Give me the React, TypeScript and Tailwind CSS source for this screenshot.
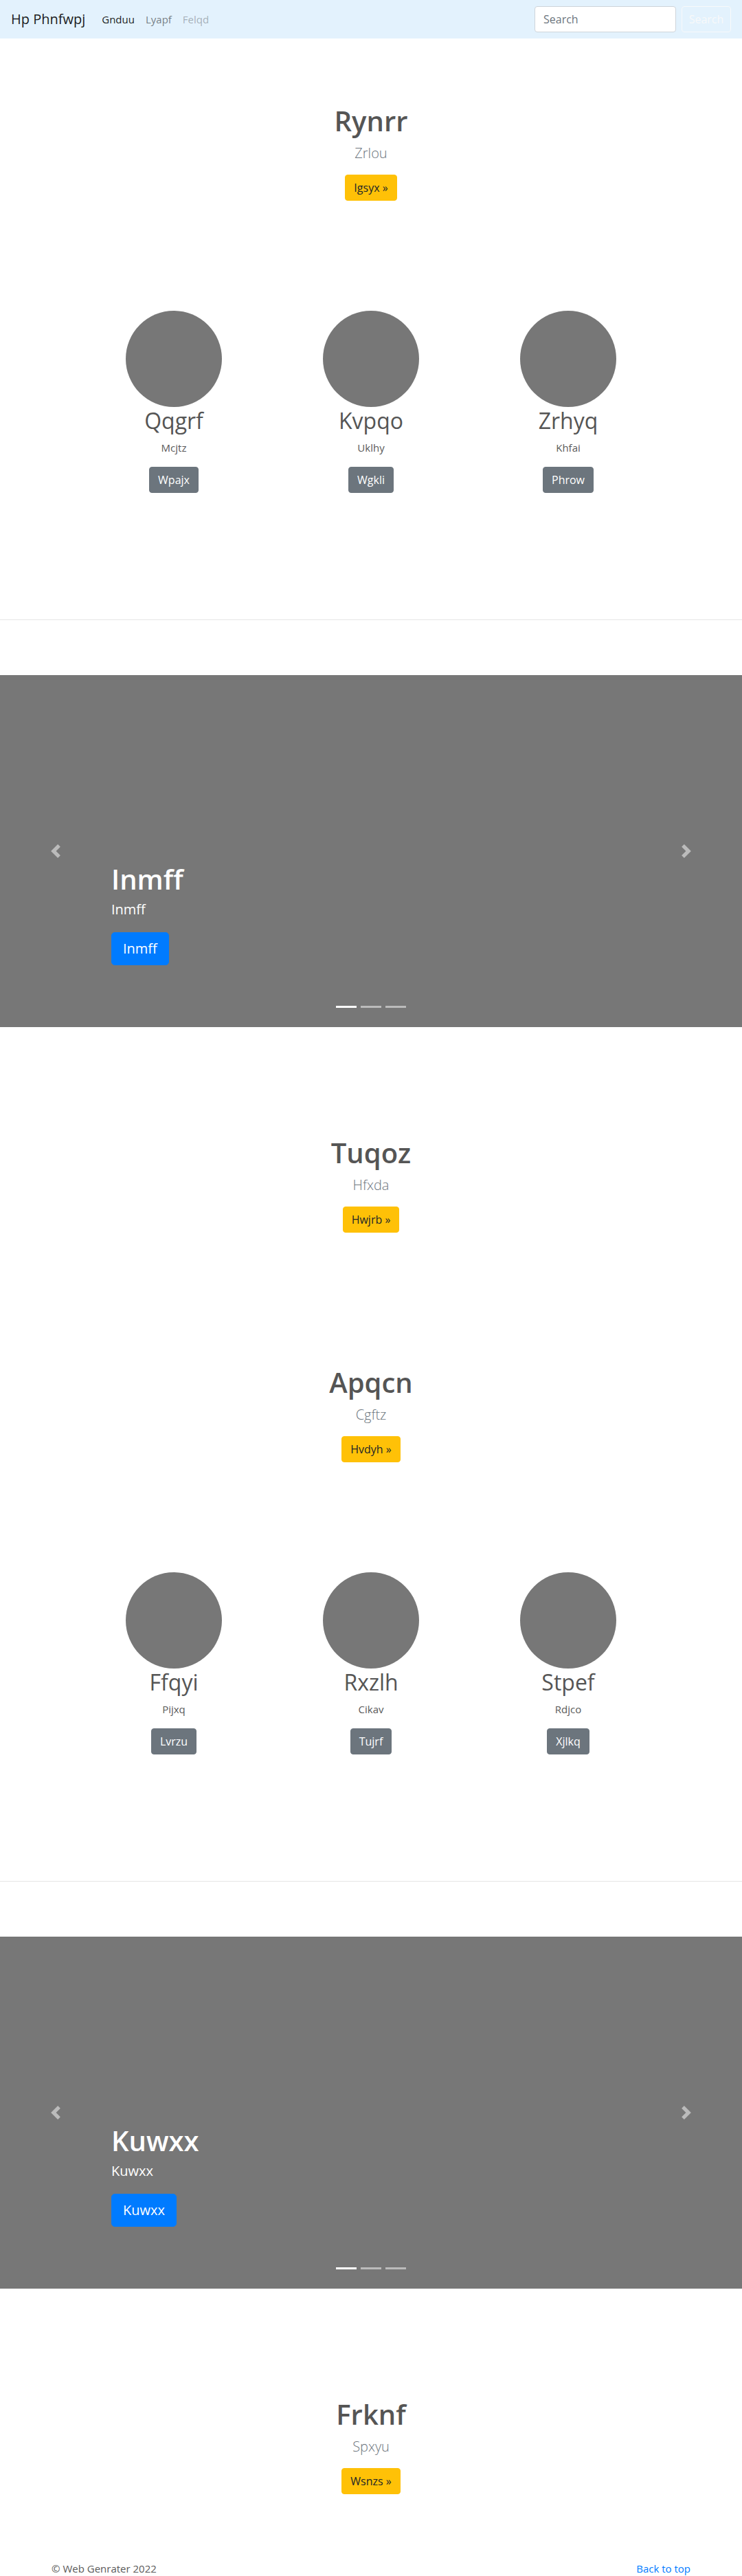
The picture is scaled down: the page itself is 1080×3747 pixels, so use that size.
import React from "react";

type Member = { name: string; role: string; cta: string };

const ROW_ONE: Member[] = [
  { name: "Qqgrf", role: "Mcjtz", cta: "Wpajx" },
  { name: "Kvpqo", role: "Uklhy", cta: "Wgkli" },
  { name: "Zrhyq", role: "Khfai", cta: "Phrow" },
];

const ROW_TWO: Member[] = [
  { name: "Ffqyi", role: "Pijxq", cta: "Lvrzu" },
  { name: "Rxzlh", role: "Cikav", cta: "Tujrf" },
  { name: "Stpef", role: "Rdjco", cta: "Xjlkq" },
];

function Hero({ title, lead, cta, className = "" }: { title: string; lead: string; cta: string; className?: string }) {
  return (
    <section className={`flex flex-col items-center text-center ${className}`}>
      <h1 className="mb-2 text-[40px] leading-[48px] font-semibold text-[#555]">{title}</h1>
      <p className="mb-4 text-xl leading-[30px] font-light text-[#6c757d]">{lead}</p>
      <a className="h-[38px] rounded border border-[#ffc107] bg-[#ffc107] px-3 py-[6px] text-base leading-6 text-[#212529]">
        {cta} »
      </a>
    </section>
  );
}

function Team({ people, className = "" }: { people: Member[]; className?: string }) {
  return (
    <div className={`mx-auto grid w-[861px] grid-cols-3 ${className}`}>
      {people.map((p) => (
        <div key={p.name} className="flex flex-col items-center text-center">
          <div className="h-[140px] w-[140px] rounded-full bg-[#777]" />
          <h2 className="mt-px mb-2 text-[32px] leading-[38px] font-normal text-[#555]">{p.name}</h2>
          <p className="mb-4 text-[15px] leading-6 text-[#5a5a5a]">{p.role}</p>
          <a className="h-[38px] rounded border border-[#6c757d] bg-[#6c757d] px-3 py-[6px] text-base leading-6 text-white">
            {p.cta}
          </a>
        </div>
      ))}
    </div>
  );
}

function Chevron({ dir }: { dir: "prev" | "next" }) {
  const d =
    dir === "prev"
      ? "M5.25 0l-4 4 4 4 1.5-1.5L4.25 4l2.5-2.5L5.25 0z"
      : "M2.75 0l-1.5 1.5L3.75 4l-2.5 2.5L2.75 8l4-4-4-4z";
  return (
    <svg viewBox="0 0 8 8" className="h-5 w-5" aria-hidden>
      <path d={d} fill="#fff" fillOpacity={0.5} />
    </svg>
  );
}

function Slide({ label, className = "" }: { label: string; className?: string }) {
  return (
    <div className={`relative h-[512px] bg-[#777] ${className}`}>
      <div className="absolute inset-y-0 left-0 flex w-[15%] items-center justify-center">
        <Chevron dir="prev" />
      </div>
      <div className="absolute inset-y-0 right-0 flex w-[15%] items-center justify-center">
        <Chevron dir="next" />
      </div>
      {/* caption */}
      <div className="absolute top-[273px] right-[15%] left-[15%] text-left text-white">
        <h1 className="mb-[5px] text-[40px] leading-[48px] font-semibold">{label}</h1>
        <p className="mb-[18px] text-xl leading-[30px]">{label}</p>
        <a className="inline-block h-12 rounded-[5px] border border-[#007bff] bg-[#007bff] px-4 py-2 text-xl leading-[30px] text-white">
          {label}
        </a>
      </div>
      <div className="absolute inset-x-0 bottom-[28px] flex justify-center gap-[6px]">
        <span className="h-[3px] w-[30px] bg-white" />
        <span className="h-[3px] w-[30px] bg-white/50" />
        <span className="h-[3px] w-[30px] bg-white/50" />
      </div>
    </div>
  );
}

export default function App() {
  return (
    <div className="min-h-[3747px] bg-white font-['Open_Sans',sans-serif] text-[#212529]">
      <nav className="flex h-14 items-center justify-between bg-[#e3f2fd] px-4">
        <div className="flex items-center">
          <a className="mr-4 text-xl leading-[30px] text-black/90">Hp Phnfwpj</a>
          <ul className="flex items-center text-[15px]">
            <li className="px-2 text-black/90">Gnduu</li>
            <li className="px-2 text-black/50">Lyapf</li>
            <li className="px-2 text-black/30">Felqd</li>
          </ul>
        </div>
        <form className="flex items-center gap-2">
          <input
            placeholder="Search"
            className="h-[38px] w-[206px] rounded border border-[#ced4da] bg-white px-3 text-base text-[#495057] outline-none placeholder:text-[#6c757d]"
          />
          <button
            type="button"
            className="h-[38px] w-[72px] rounded border border-[#f8f9fa] text-base text-[#f8f9fa]"
          >
            Search
          </button>
        </form>
      </nav>

      <Hero title="Rynrr" lead="Zrlou" cta="Igsyx" className="pt-24" />
      <Team people={ROW_ONE} className="mt-[160px]" />
      <hr className="mt-[184px] border-0 border-t border-[#e5e5e5]" />
      <Slide label="Inmff" className="mt-20" />

      <Hero title="Tuqoz" lead="Hfxda" cta="Hwjrb" className="mt-[159px]" />
      <Hero title="Apqcn" lead="Cgftz" cta="Hvdyh" className="mt-[194px]" />
      <Team people={ROW_TWO} className="mt-[160px]" />
      <hr className="mt-[184px] border-0 border-t border-[#e5e5e5]" />
      <Slide label="Kuwxx" className="mt-20" />

      <Hero title="Frknf" lead="Spxyu" cta="Wsnzs" className="mt-[159px]" />

      <footer className="mx-auto mt-24 flex max-w-[960px] justify-between px-[15px] text-[15px] leading-6">
        <p className="text-[#5a5a5a]">© Web Genrater 2022</p>
        <a className="text-[#007bff]">Back to top</a>
      </footer>
    </div>
  );
}
